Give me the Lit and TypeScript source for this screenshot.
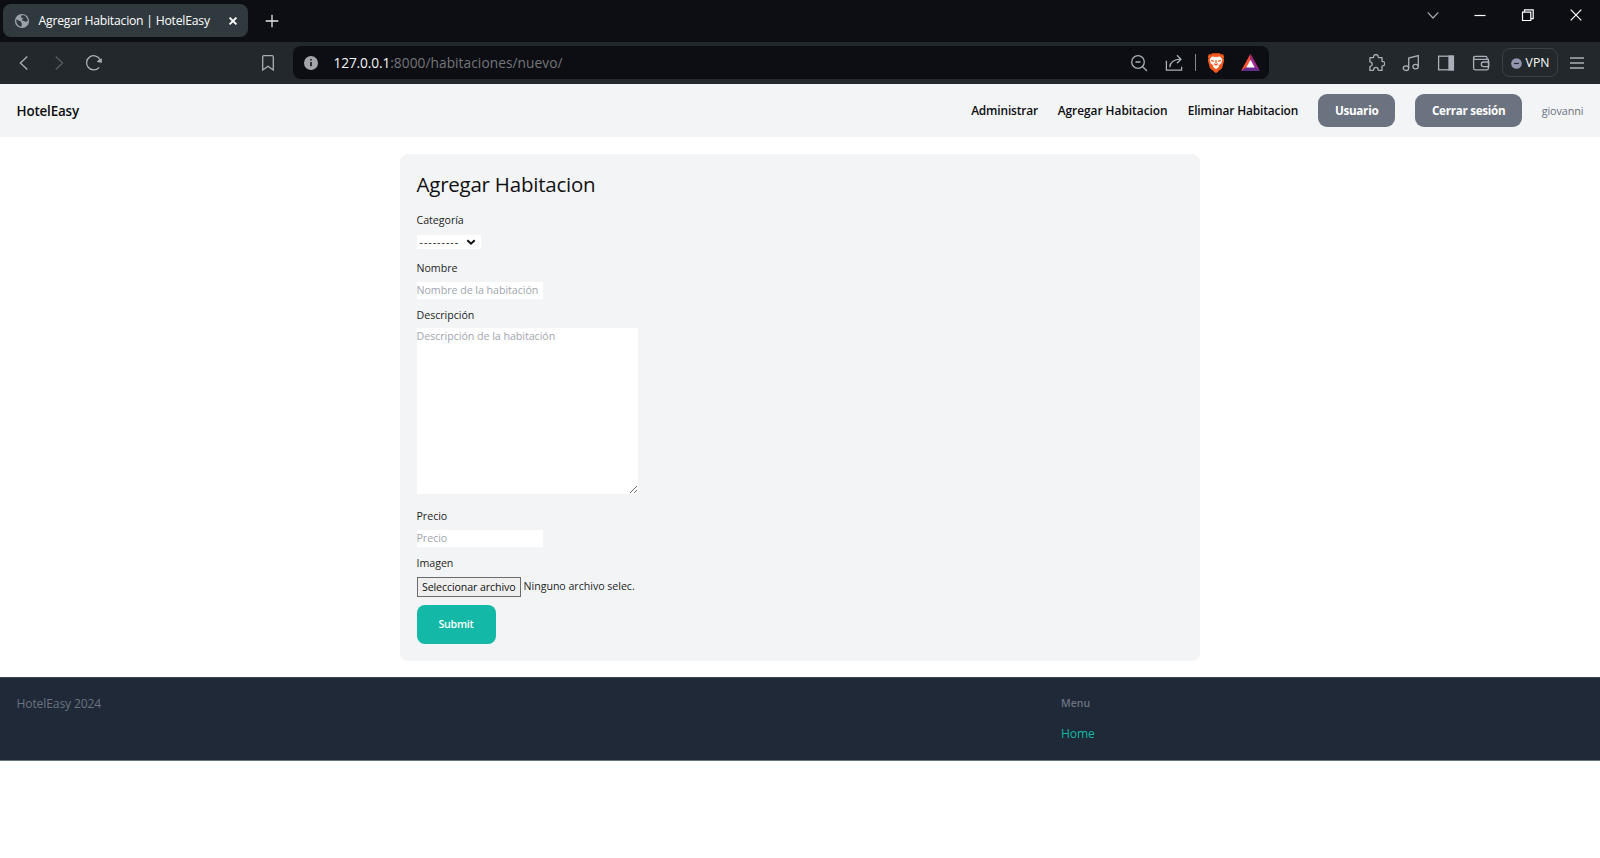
import { LitElement, html, css, svg } from "lit";
import { customElement } from "lit/decorators.js";

const icon = (body: unknown, cls = "") =>
  html`<svg class="icon ${cls}" viewBox="0 0 18 18" aria-hidden="true">${body}</svg>`;

const icons = {
  globe: svg`<circle cx="9" cy="9" r="8" fill="#9aa3aa" stroke="none"/><path d="M2.600 7.200c2 .2 2.800 1.900 4.700 2 1 .3.700 1.800 1.400 2.500.5.800-.2 1.700-.3 3.600C4.800 15 2.200 11.500 2.600 7.200zM8.200 2.900c1.500-.6 3.800-.2 4.900.9 1.400 1.200 2.300 2.900 2.300 4.900-.9.800-1.700 1.600-2.900.8-.9-.8-2.300-.4-3.200-1.200-.7-1 .4-1.500 1.200-1.700.4-1.200-1.800-1-2.700-1.300z" fill="#31393e" stroke="none"/>`,
  close: svg`<path d="M5.600 5.600l6.800 6.800M12.400 5.600l-6.800 6.800"/>`,
  plus: svg`<path d="M9 2.700v12.600M2.700 9h12.600"/>`,
  back: svg`<path d="M12.300 2.500L5.400 9l6.900 6.500"/>`,
  forward: svg`<path d="M5.700 2.500L12.600 9l-6.900 6.500"/>`,
  reload: svg`<path d="M14.200 13.300A7.100 7.100 0 1 1 15.200 6"/><path d="M16.800 4.300v3.900c0 .4-.3.700-.7.600l-3.600-.9c-.5-.1-.7-.7-.3-1z" fill="currentColor" stroke="none"/>`,
  bookmark: svg`<path d="M3.700 3c0-.8.500-1.300 1.200-1.300h8.200c.7 0 1.200.5 1.200 1.300v13l-5.300-3.700L3.700 16z"/>`,
  info: svg`<circle cx="9" cy="9" r="7" fill="#a3a5ad" stroke="none"/><path d="M9 8v4.300M9 5v1.600" stroke="#14151b" stroke-width="1.600"/>`,
  zoomOut: svg`<circle cx="8" cy="8" r="6.300"/><path d="M12.700 12.700l4.300 4.300M5.500 8h5"/>`,
  share: svg`<path d="M1.400 6.800v9.300h15.200v-3.300M4.800 13.200c.4-4.800 3.800-7.700 10.900-8M12 1.200l4 4-4 4"/>`,
  lion: svg`<path d="M4.500 1.200l1-1.200h7l1 1.200 1.700-.2 1.200 2-.6 1.700.6 1.600-2 7.200-5.400 4.500-5.400-4.500-2-7.200.6-1.600L1.600 3l1.200-2z" fill="#f4581c" stroke="none" transform="translate(0 .2)"/><path d="M5.400 3.100l3.600.4 3.600-.4 2.200 2.700-.9 2.200.2 1.100-2.800 2.100.4 1.100L9 14.700l-2.700-2.400.4-1.100-2.800-2.100.2-1.100-.9-2.200z" fill="#fff" stroke="none"/><path d="M4.700 6.600l2.500.9M13.300 6.600l-2.500.9M9 6.200v3.200M7.200 9.700L9 10.800l1.800-1.100" stroke="#f4581c" stroke-width="1.100"/>`,
  bat: svg`<path d="M9 .8L0 17l9-5.800z" fill="#ff5136" stroke="none"/><path d="M9 .8L18 17l-9-5.800z" fill="#a3278f" stroke="none"/><path d="M0 17l9-6 9 6z" fill="#642c91" stroke="none"/><path d="M9 6.300l4 7.400H5z" fill="#fff" stroke="none"/>`,
  puzzle: svg`<path d="M3 3.600h3.300c.3-.1.300-.4.300-.8a2.300 2.300 0 0 1 4.600 0c0 .4 0 .8.400.8H15v3.600c0 .5.300.5.700.5a2.100 2.100 0 0 1 0 4.200c-.4 0-.7.100-.7.500v4H11.500c-.4 0-.4-.4-.4-.8a2.200 2.200 0 0 0-4.400 0c0 .4 0 .8-.4.800H2.900v-3.600c0-.4.200-.4.600-.5a2.200 2.200 0 0 0 0-4.300c-.4 0-.6-.1-.6-.500z" stroke-linejoin="round"/>`,
  music: svg`<ellipse cx="4" cy="14.200" rx="2.700" ry="2.300"/><ellipse cx="13.600" cy="12.600" rx="2.700" ry="2.300"/><path d="M6.700 14V4l9.600-2.400v11"/>`,
  panel: svg`<rect x="1.600" y="2.200" width="14.800" height="13.600"/><path d="M12 2.200h4.400v13.600H12z" fill="currentColor"/>`,
  wallet: svg`<path d="M16.400 6.700V5.300H3.300c-2.300 0-2.300-3 0-3h10.200c1 0 1.500.5 1.500 1.500v1.500M1.600 4v10.300c0 1 .5 1.500 1.500 1.500h11.800c1 0 1.500-.5 1.500-1.500V6.700M16.800 8h-5.300c-3 0-3 4.700 0 4.700h5.300z"/>`,
  vpn: svg`<circle cx="9" cy="9" r="8.700" fill="#9295ad" stroke="none"/><path d="M5 9h8" stroke="#22272b" stroke-width="2"/>`,
  menu: svg`<path d="M2 4h14M2 9h14M2 14h14"/>`,
  chevron: svg`<path d="M3.700 6.300L9 12l5.300-5.700"/>`,
  minimize: svg`<path d="M3.500 9.500h11"/>`,
  restore: svg`<path d="M3.500 6.200h8.300v8.300H3.500zM5.500 6V3.900h8.700v8.700H12"/>`,
  exit: svg`<path d="M3.700 3.700l10.600 10.600M14.300 3.700L3.700 14.300"/>`,
  caret: svg`<path d="M5.300 7.200l3.700 3.500 3.700-3.500" stroke-width="2"/>`,
};

@customElement("browser-chrome")
export class BrowserChrome extends LitElement {
  static styles = css`
    :host { display: block; color: #a9b0b7; }
    .icon { display: block; width: 18px; height: 18px; fill: none; stroke: currentColor; stroke-width: 1.3; flex: none; }
    .tabs { height: 42px; background: #0d0e13; display: flex; align-items: flex-start; box-sizing: border-box; padding: 4px 0 0 3px; }
    .tab { width: 245px; height: 33px; box-sizing: border-box; border-radius: 8px; background: #30393e; display: flex; align-items: center; padding: 0 6px 0 11px; color: #fff; }
    .tab .favicon { width: 16px; height: 16px; }
    .title { margin-left: 8.500px; flex: 1; font-size: 12.2px; letter-spacing: -0.220px; line-height: 18px; white-space: nowrap; }
    .tab .bold { stroke-width: 1.900; }
    .new { margin: 8px 0 0 15px; color: #e4e6e8; }
    .window { margin-left: auto; display: flex; color: #fff; padding-top: 2px; }
    .window .icon { width: 18px; margin: 0 15px; stroke-width: 1.2; }
    .window .thin { color: #a7a9ac; margin-right: 14px; }
    .toolbar { height: 42px; background: #22282c; display: flex; align-items: center; box-sizing: border-box; padding: 0 6px 1px 6px; }
    .slot { width: 35px; display: flex; justify-content: center; flex: none; }
    .dim { color: #575e64; }
    .save { margin-left: 139px; margin-right: 8px; }
    .address { width: 976px; height: 33px; border-radius: 8px; background: #0d0e13; display: flex; align-items: center; box-sizing: border-box; padding: 0 1px 0 9px; margin-right: 89px; }
    .url { margin: 1px 0 0 13.500px; font-size: 13.7px; line-height: 20px; color: #74767a; flex: 1; white-space: nowrap; }
    .host { color: #f4f5f6; letter-spacing: -0.120px; }
    .path { letter-spacing: 0.070px; }
    .rule { width: 1px; height: 17px; background: #85888c; margin: 0 2px 0 4px; }
    .lion { width: 20px; height: 20px; }
    .bat { width: 19px; height: 19px; }
    .vpn { width: 56px; height: 29px; box-sizing: border-box; border: 1px solid #3a4247; border-radius: 8px; margin: 0 1px 0 4px; display: flex; align-items: center; justify-content: center; gap: 4px; color: #fff; font-size: 12.200px; line-height: 18px; padding-top: 1px; }
    .vpn .icon { width: 11px; height: 11px; }
  `;
  render() {
    return html`
      <div class="tabs">
        <div class="tab">${icon(icons.globe, "favicon")}<span class="title">Agregar Habitacion | HotelEasy</span>${icon(icons.close, "bold")}</div>
        ${icon(icons.plus, "new")}
        <div class="window">${icon(icons.chevron, "thin")}${icon(icons.minimize)}${icon(icons.restore)}${icon(icons.exit)}</div>
      </div>
      <div class="toolbar">
        <span class="slot">${icon(icons.back)}</span>
        <span class="slot dim">${icon(icons.forward)}</span>
        <span class="slot">${icon(icons.reload)}</span>
        <span class="slot save">${icon(icons.bookmark)}</span>
        <div class="address">
          ${icon(icons.info)}
          <span class="url"><span class="host">127.0.0.1</span><span class="path">:8000/habitaciones/nuevo/</span></span>
          <span class="slot">${icon(icons.zoomOut)}</span>
          <span class="slot">${icon(icons.share)}</span>
          <span class="rule"></span>
          <span class="slot">${icon(icons.lion, "lion")}</span>
          <span class="slot">${icon(icons.bat, "bat")}</span>
        </div>
        <span class="slot">${icon(icons.puzzle)}</span>
        <span class="slot">${icon(icons.music)}</span>
        <span class="slot">${icon(icons.panel)}</span>
        <span class="slot">${icon(icons.wallet)}</span>
        <span class="vpn">${icon(icons.vpn)}VPN</span>
        <span class="slot">${icon(icons.menu)}</span>
      </div>`;
  }
}

@customElement("site-nav")
export class SiteNav extends LitElement {
  static styles = css`
    :host { display: flex; align-items: center; justify-content: space-between; height: 53px; box-sizing: border-box; padding: 0 16.500px 1px; background: #f3f4f6; font-size: 11.9px; font-weight: 600; line-height: 18px; color: #0c0d10; white-space: nowrap; }
    .brand { font-size: 13.4px; letter-spacing: -0.160px; padding-top: 1px; }
    nav { display: flex; align-items: center; }
    .admin { width: 86.500px; letter-spacing: -0.140px; }
    .add { width: 130px; letter-spacing: -0.020px; }
    .remove { width: 130.500px; letter-spacing: -0.120px; }
    button { height: 33px; border: 0; padding: 0; border-radius: 9px; background: #6b7280; color: #fff; font: 700 11.700px/18px "Open Sans", sans-serif; letter-spacing: -0.300px; }
    .user { width: 77px; margin-right: 20px; }
    .logout { width: 107px; margin-right: 19.500px; }
    .name { font-size: 10.900px; font-weight: 400; color: #6b7280; letter-spacing: -0.120px; padding-top: 1px; }
  `;
  render() {
    return html`
      <span class="brand">HotelEasy</span>
      <nav>
        <span class="admin">Administrar</span>
        <span class="add">Agregar Habitacion</span>
        <span class="remove">Eliminar Habitacion</span>
        <button class="user">Usuario</button>
        <button class="logout">Cerrar sesión</button>
        <span class="name">giovanni</span>
      </nav>`;
  }
}

@customElement("room-form")
export class RoomForm extends LitElement {
  static styles = css`
    :host { display: flex; flex-direction: column; align-items: flex-start; width: 800px; height: 507px; box-sizing: border-box; padding: 17px 16.500px; margin: 16.500px auto; border-radius: 8px; background: #f3f4f6; color: #1c1f24; font-size: 10.650px; letter-spacing: -0.030px; line-height: 17px; }
    h1 { margin: 0 0 15px; font-size: 20.5px; line-height: 26px; font-weight: 400; letter-spacing: -0.230px; color: #111; }
    label { height: 17px; }
    input, textarea { display: block; box-sizing: border-box; border: 0; padding: 0; margin: 0; border-radius: 0; background: #fff; font: 400 10.650px/17px "Open Sans", sans-serif; letter-spacing: -0.030px; outline: 0; }
    ::placeholder { color: #a0a5ae; opacity: 1; }
    input { width: 126px; height: 17px; padding-top: 1px; }
    .select { display: flex; align-items: center; width: 64px; height: 14px; box-sizing: border-box; padding-left: 3px; background: #fff; color: #1c1f24; line-height: 14px; }
    .dashes { letter-spacing: 0.980px; width: 42px; }
    .caret { width: 18px; height: 18px; fill: none; stroke: #111; flex: none; }
    .category { margin: 6px 0 11px; }
    .text { margin: 5px 0 8px; }
    textarea { width: 221.500px; height: 167px; margin: 4.500px 0 13.500px; resize: both; }
    .file { display: flex; align-items: center; gap: 2.500px; margin: 5px 0 8px; height: 20px; }
    .choose { box-sizing: border-box; width: 104.500px; height: 20px; border: 1px solid #6b6b6b; background: #efefef; text-align: center; line-height: 18px; color: #111; white-space: nowrap; letter-spacing: -0.100px; }
    .submit { width: 79px; height: 39px; border: 0; padding: 0; border-radius: 8px; background: #14b8a6; color: #fff; font: 600 10.600px/17px "Open Sans", sans-serif; letter-spacing: -0.200px; }
  `;
  render() {
    return html`
      <h1>Agregar Habitacion</h1>
      <label>Categoría</label>
      <div class="select category"><span class="dashes">---------</span>${icon(icons.caret, "caret")}</div>
      <label>Nombre</label>
      <input class="text" placeholder="Nombre de la habitación" />
      <label>Descripción</label>
      <textarea placeholder="Descripción de la habitación"></textarea>
      <label>Precio</label>
      <input class="text" placeholder="Precio" />
      <label>Imagen</label>
      <div class="file"><span class="choose">Seleccionar archivo</span><span>Ninguno archivo selec.</span></div>
      <button class="submit">Submit</button>`;
  }
}

@customElement("site-footer")
export class SiteFooter extends LitElement {
  static styles = css`
    :host { display: grid; grid-template-columns: 1044.500px 1fr; height: 84px; box-sizing: border-box; padding: 16px 16.500px; background: #1f2937; color: #6b7280; font-size: 12.100px; line-height: 19px; border-top: 1px solid #3b4754; border-bottom: 1px solid #6b747d; }
    .copy { letter-spacing: -0.130px; }
    .heading { font-size: 10.500px; font-weight: 600; line-height: 17px; padding-top: 1px; }
    .home { margin-top: 12px; color: #14b8a6; letter-spacing: -0.100px; }
  `;
  render() {
    return html`
      <span class="copy">HotelEasy 2024</span>
      <div><div class="heading">Menu</div><div class="home">Home</div></div>`;
  }
}

@customElement("app-root")
export class AppRoot extends LitElement {
  static styles = css`
    :host { display: block; height: 858px; overflow: hidden; background: #fff; font-family: "Open Sans", "Noto Sans", sans-serif; }
  `;
  render() {
    return html`<browser-chrome></browser-chrome><site-nav></site-nav><room-form></room-form><site-footer></site-footer>`;
  }
}
